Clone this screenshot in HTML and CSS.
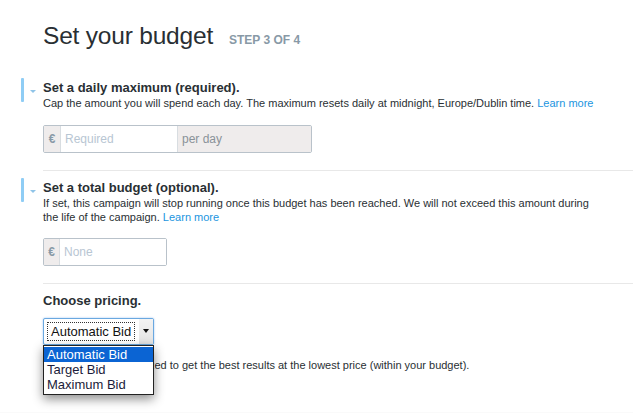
FILE: index.html
```html
<!DOCTYPE html>
<html lang="en">
<head>
  <meta charset="UTF-8" />
  <title>Set your budget</title>
  <link rel="stylesheet" href="styles.css">
</head>
<body>
  <div class="page">
    <div class="page-head">
      <h1>Set your budget</h1>
      <span class="step">STEP 3 OF 4</span>
    </div>

    <div class="block">
      <div class="rail"><span class="bar"></span><span class="caret"></span></div>
      <div class="block-body">
        <h3>Set a daily maximum (required).</h3>
        <p class="help">Cap the amount you will spend each day. The maximum resets daily at midnight, Europe/Dublin time. <a href="#">Learn more</a></p>
        <div class="input-group wide">
          <span class="addon cur">€</span>
          <input type="text" placeholder="Required">
          <span class="addon unit">per day</span>
        </div>
      </div>
    </div>

    <div class="block">
      <div class="rail"><span class="bar"></span><span class="caret"></span></div>
      <div class="block-body">
        <h3>Set a total budget (optional).</h3>
        <p class="help">If set, this campaign will stop running once this budget has been reached. We will not exceed this amount during the life of the campaign. <a href="#">Learn more</a></p>
        <div class="input-group">
          <span class="addon cur">€</span>
          <input type="text" placeholder="None">
        </div>
      </div>
    </div>

    <div class="pricing">
      <h3>Choose pricing.</h3>
      <div class="select-wrap">
        <div class="select">
          <span class="select-value">Automatic Bid</span>
          <span class="select-arrow"></span>
        </div>
        <ul class="select-menu">
          <li class="selected">Automatic Bid</li>
          <li>Target Bid</li>
          <li>Maximum Bid</li>
        </ul>
      </div>
      <p class="help">Your bid will be optimized to get the best results at the lowest price (within your budget).</p>
    </div>
    <div class="footer-strip"></div>
  </div>
</body>
</html>
```

FILE: styles.css
```css
* {
  box-sizing: border-box;
}

body {
  margin: 0;
  background: #fff;
  font-family: 'Liberation Sans', Arial, sans-serif;
  color: #292f33;
  overflow: hidden;
}

.page {
  padding-left: 43px;
}

.page-head {
  display: flex;
  align-items: baseline;
  gap: 16px;
  padding-top: 21px;
  height: 78px;
}

h1 {
  margin: 0;
  font-size: 24.5px;
  font-weight: normal;
  line-height: 30px;
  color: #292f33;
  letter-spacing: -0.2px;
}

.step {
  font-size: 12px;
  font-weight: bold;
  color: #8899a6;
}

.block {
  display: flex;
  margin-left: -22px;
  margin-bottom: 7px;
}

.rail {
  width: 22px;
  flex: none;
  display: flex;
  align-items: flex-start;
}

.bar {
  width: 3px;
  height: 24px;
  background: #8fcdf5;
  border-radius: 1px;
}

.caret {
  margin: 12px 0 0 6px;
  width: 0;
  height: 0;
  border-left: 3px solid transparent;
  border-right: 3px solid transparent;
  border-top: 3px solid #8fc4e8;
}

.block-body {
  flex: 1;
  padding-top: 2px;
  padding-bottom: 17px;
  border-bottom: 1px solid #e8e8e8;
}

h3 {
  margin: 0;
  font-size: 13px;
  font-weight: bold;
  line-height: 16px;
  color: #292f33;
}

.help {
  margin: 0;
  max-width: 554px;
  font-size: 11px;
  line-height: 14px;
  color: #292f33;
}

.help a {
  color: #1b95e0;
  text-decoration: none;
}

.input-group {
  display: flex;
  width: 124px;
  height: 28px;
  margin-top: 15px;
  border: 1px solid #b9c2ca;
  border-radius: 2px;
}

.input-group.wide {
  width: 269px;
}

.block + .block .input-group {
  margin-top: 14px;
}

.addon {
  background: #efecec;
  color: #8899a6;
  font-size: 12px;
  display: flex;
  align-items: center;
}

.addon.cur {
  width: 17px;
  justify-content: center;
  font-weight: bold;
  border-right: 1px solid #d8dde1;
}

.addon.unit {
  flex: 1;
  padding-left: 4px;
  color: #8a9299;
  border-left: 1px solid #d8dde1;
}

.input-group input {
  width: 106px;
  border: none;
  outline: none;
  padding: 0 4px;
  font-family: inherit;
  font-size: 12px;
  color: #292f33;
  background: #fff;
}

.input-group.wide input {
  width: 116px;
}

.input-group input::placeholder {
  color: #b8c6d3;
}

.pricing {
  padding-top: 2px;
  height: 121px;
}

.pricing h3 {
  margin-bottom: 9px;
}

.select-wrap {
  position: relative;
  width: 111px;
}

.select {
  display: flex;
  height: 27px;
  border: 1px solid #6aa8e0;
  border-radius: 2px;
  background: #fff;
  box-shadow: 0 0 2px rgba(80, 150, 230, 0.6);
}

.select-value {
  margin: 3px 4px 3px 3px;
  padding: 0 3px;
  border: 1px dotted #333;
  font-size: 13px;
  line-height: 17px;
  color: #111;
}

.select-arrow {
  flex: 1;
  background: #e9e9e9 linear-gradient(#f3f3f3, #e3e3e3);
  position: relative;
}

.select-arrow::after {
  content: "";
  position: absolute;
  left: 4px;
  top: 10px;
  border-left: 3px solid transparent;
  border-right: 3px solid transparent;
  border-top: 4px solid #111;
}

.select-menu {
  position: absolute;
  left: 0;
  top: 27px;
  width: 111px;
  margin: 0;
  padding: 1px 0 2px;
  list-style: none;
  background: #fff;
  border: 1px solid #222;
  box-shadow: 0 4px 10px rgba(0, 0, 0, 0.45);
  z-index: 10;
}

.select-menu li {
  font-size: 13px;
  line-height: 15px;
  padding: 0 3px;
  color: #1b1b3a;
}

.select-menu li.selected {
  background: #0b64d3;
  color: #fff;
}

.pricing .help {
  margin-top: 13px;
}

.footer-strip {
  margin-left: -43px;
  height: 20px;
  background: #fafafa;
}
```
